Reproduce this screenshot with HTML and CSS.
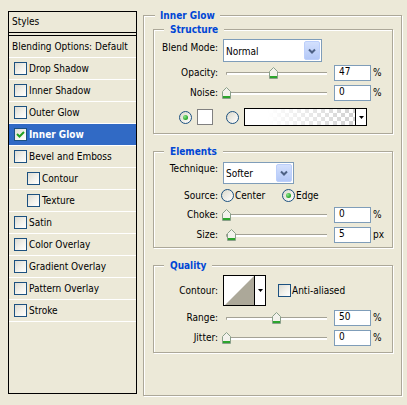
FILE: index.html
```html
<!DOCTYPE html>
<html lang="en">
<head>
<meta charset="utf-8">
<title>Layer Style - Inner Glow</title>
<link rel="stylesheet" href="styles.css">
</head>
<body>
<div class="dialog">
  <div class="styles-list">
    <div class="sl-head">Styles</div>
    <div class="sl-row sl-blend">Blending Options: Default</div>
    <div class="sl-row"><span class="cb"></span><span>Drop Shadow</span></div>
    <div class="sl-row"><span class="cb"></span><span>Inner Shadow</span></div>
    <div class="sl-row"><span class="cb"></span><span>Outer Glow</span></div>
    <div class="sl-row is-selected"><span class="cb"><svg width="11" height="11" viewBox="0 0 11 11"><path d="M2 5 L4.5 7.5 L9 3" fill="none" stroke="#21A121" stroke-width="2"/></svg></span><span>Inner Glow</span></div>
    <div class="sl-row"><span class="cb"></span><span>Bevel and Emboss</span></div>
    <div class="sl-row sl-sub"><span class="cb"></span><span>Contour</span></div>
    <div class="sl-row sl-sub"><span class="cb"></span><span>Texture</span></div>
    <div class="sl-row"><span class="cb"></span><span>Satin</span></div>
    <div class="sl-row"><span class="cb"></span><span>Color Overlay</span></div>
    <div class="sl-row"><span class="cb"></span><span>Gradient Overlay</span></div>
    <div class="sl-row"><span class="cb"></span><span>Pattern Overlay</span></div>
    <div class="sl-row"><span class="cb"></span><span>Stroke</span></div>
  </div>

  <div class="group group-main">
    <div class="legend legend-main">Inner Glow</div>

    <div class="group group-sub group-structure">
      <div class="legend">Structure</div>
      <div class="row row-blend">
        <div class="lbl">Blend Mode:</div>
        <div class="combo combo-blend"><span class="combo-text">Normal</span><span class="combo-btn"><svg width="8" height="6" viewBox="0 0 8 6"><path d="M1 1.5 L4 4.5 L7 1.5" fill="none" stroke="#4D6185" stroke-width="2"/></svg></span></div>
      </div>
      <div class="row row-opacity">
        <div class="lbl lbl-s">Opacity:</div>
        <div class="slider"><div class="track"></div><svg class="thumb" style="left:47px" width="9" height="12" viewBox="0 0 9 12"><path d="M0.5 11.5V4.5L4.5 0.5L8.5 4.5V11.5Z" fill="#F3F2EC" stroke="#8AA08A"/><rect x="1" y="9" width="7" height="2" fill="#2CA52C"/></svg></div>
        <div class="num">47</div><div class="unit">%</div>
      </div>
      <div class="row row-noise">
        <div class="lbl lbl-s">Noise:</div>
        <div class="slider"><div class="track"></div><svg class="thumb" style="left:0px" width="9" height="12" viewBox="0 0 9 12"><path d="M0.5 11.5V4.5L4.5 0.5L8.5 4.5V11.5Z" fill="#F3F2EC" stroke="#8AA08A"/><rect x="1" y="9" width="7" height="2" fill="#2CA52C"/></svg></div>
        <div class="num">0</div><div class="unit">%</div>
      </div>
      <div class="row row-color">
        <span class="radio radio-1 on"></span>
        <span class="swatch"></span>
        <span class="radio radio-2"></span>
        <div class="grad"><div class="grad-fill"></div><div class="grad-arrow"><svg width="5" height="3" viewBox="0 0 5 3"><path d="M0 0H5L2.5 3Z" fill="#000"/></svg></div></div>
      </div>
    </div>

    <div class="group group-sub group-elements">
      <div class="legend">Elements</div>
      <div class="row row-tech">
        <div class="lbl">Technique:</div>
        <div class="combo combo-tech"><span class="combo-text">Softer</span><span class="combo-btn"><svg width="8" height="6" viewBox="0 0 8 6"><path d="M1 1.5 L4 4.5 L7 1.5" fill="none" stroke="#4D6185" stroke-width="2"/></svg></span></div>
      </div>
      <div class="row row-source">
        <div class="lbl">Source:</div>
        <div class="opt opt-center"><span class="radio"></span><span class="opt-text">Center</span></div>
        <div class="opt"><span class="radio on"></span><span class="opt-text">Edge</span></div>
      </div>
      <div class="row row-choke">
        <div class="lbl lbl-s">Choke:</div>
        <div class="slider"><div class="track"></div><svg class="thumb" style="left:0px" width="9" height="12" viewBox="0 0 9 12"><path d="M0.5 11.5V4.5L4.5 0.5L8.5 4.5V11.5Z" fill="#F3F2EC" stroke="#8AA08A"/><rect x="1" y="9" width="7" height="2" fill="#2CA52C"/></svg></div>
        <div class="num">0</div><div class="unit">%</div>
      </div>
      <div class="row row-size">
        <div class="lbl lbl-s">Size:</div>
        <div class="slider"><div class="track"></div><svg class="thumb" style="left:5px" width="9" height="12" viewBox="0 0 9 12"><path d="M0.5 11.5V4.5L4.5 0.5L8.5 4.5V11.5Z" fill="#F3F2EC" stroke="#8AA08A"/><rect x="1" y="9" width="7" height="2" fill="#2CA52C"/></svg></div>
        <div class="num">5</div><div class="unit">px</div>
      </div>
    </div>

    <div class="group group-sub group-quality">
      <div class="legend">Quality</div>
      <div class="row row-contour">
        <div class="lbl">Contour:</div>
        <div class="contour-box"><svg class="contour-curve" width="30" height="29" viewBox="0 0 30 29"><polygon points="1,29 30,0 30,29" fill="#ACA899"/></svg><div class="contour-arrow"><svg width="5" height="3" viewBox="0 0 5 3"><path d="M0 0H5L2.5 3Z" fill="#000"/></svg></div></div>
        <div class="aa"><span class="cb"></span><span class="opt-text">Anti-aliased</span></div>
      </div>
      <div class="row row-range">
        <div class="lbl lbl-s">Range:</div>
        <div class="slider"><div class="track"></div><svg class="thumb" style="left:50px" width="9" height="12" viewBox="0 0 9 12"><path d="M0.5 11.5V4.5L4.5 0.5L8.5 4.5V11.5Z" fill="#F3F2EC" stroke="#8AA08A"/><rect x="1" y="9" width="7" height="2" fill="#2CA52C"/></svg></div>
        <div class="num">50</div><div class="unit">%</div>
      </div>
      <div class="row row-jitter">
        <div class="lbl lbl-s">Jitter:</div>
        <div class="slider"><div class="track"></div><svg class="thumb" style="left:0px" width="9" height="12" viewBox="0 0 9 12"><path d="M0.5 11.5V4.5L4.5 0.5L8.5 4.5V11.5Z" fill="#F3F2EC" stroke="#8AA08A"/><rect x="1" y="9" width="7" height="2" fill="#2CA52C"/></svg></div>
        <div class="num">0</div><div class="unit">%</div>
      </div>
    </div>
  </div>
</div>
</body>
</html>
```
FILE: styles.css
```css
* { box-sizing: border-box; }
html, body { margin: 0; padding: 0; }
body {
  width: 407px;
  height: 405px;
  overflow: hidden;
  background: #ECE9D8;
  font-family: "DejaVu Sans Condensed", "Liberation Sans", sans-serif;
  font-size: 10px;
  line-height: 13px;
  color: #000;
}
.dialog {
  display: flex;
  align-items: flex-start;
  padding: 11px 0 0 8px;
}

/* ---------- styles list ---------- */
.styles-list {
  flex: none;
  width: 129px;
  height: 383px;
  border: 1px solid #000;
}
.sl-head {
  height: 21px;
  padding: 3px 0 0 3px;
  border-bottom: 1px solid #000;
  margin-bottom: 2px;
}
.sl-row {
  display: flex;
  align-items: center;
  height: 22px;
  padding-left: 5px;
  border-bottom: 1px solid #fff;
}
.sl-row .cb { margin-right: 2px; }
.sl-blend {
  height: 23px;
  padding-left: 3px;
  border-top: 1px solid #000;
}
.sl-sub { padding-left: 18px; }
.sl-row.is-selected {
  background: #316AC5;
  color: #fff;
  font-weight: bold;
}

.cb {
  flex: none;
  width: 13px;
  height: 13px;
  border: 1px solid #1C5180;
  background: linear-gradient(135deg, #DCDBD3 0%, #F3F2EC 55%, #fff 100%);
  display: flex;
  align-items: center;
  justify-content: center;
}

/* ---------- group boxes ---------- */
.group {
  border: 1px solid #ACA899;
  box-shadow: inset 1px 1px 0 #fff, 1px 1px 0 #fff;
}
.group-main {
  flex: none;
  width: 259px;
  height: 381px;
  margin: 4px 0 0 6px;
  padding: 0 8px 0 9px;
}
.group-sub { width: 240px; }
.group-structure { margin-top: 7px; padding-bottom: 7px; }
.group-elements { margin-top: 17px; padding-bottom: 4px; }
.group-quality { margin-top: 17px; padding-bottom: 6px; }

.legend {
  width: fit-content;
  height: 13px;
  margin: -7px 0 0 10px;
  padding: 0 6px;
  background: #ECE9D8;
  color: #0046D5;
  font-weight: bold;
}
.legend-main {
  margin-left: 2px;
  padding: 0 5px;
}

/* ---------- rows ---------- */
.row {
  display: flex;
  align-items: center;
}
.lbl {
  flex: none;
  width: 64px;
  text-align: right;
}
.lbl-s { padding-bottom: 2px; }

.row-blend { margin-top: 3px; height: 23px; align-items: flex-start; }
.row-blend .lbl { padding-top: 2px; }
.row-opacity { margin-top: 3px; height: 16px; }
.row-noise { margin-top: 4px; height: 16px; }
.row-color { margin-top: 7px; height: 18px; }
.row-tech { margin-top: 4px; height: 22px; align-items: flex-start; }
.row-source { margin-top: 5px; height: 13px; }
.row-choke { margin-top: 5px; height: 16px; }
.row-size { margin-top: 4px; height: 16px; }
.row-contour { margin-top: 3px; height: 31px; }
.row-range { margin-top: 4px; height: 16px; }
.row-jitter { margin-top: 4px; height: 16px; }

/* ---------- combo box ---------- */
.combo {
  flex: none;
  display: flex;
  margin-left: 5px;
  border: 1px solid #7F9DB9;
  background: #fff;
}
.combo-blend { width: 99px; height: 23px; }
.combo-tech { width: 71px; height: 22px; }
.combo-text { flex: 1; padding-left: 2px; }
.combo-blend .combo-text { padding-top: 5px; }
.combo-tech .combo-text { padding-top: 4px; }
.combo-btn {
  flex: none;
  width: 16px;
  margin: 1px;
  border: 1px solid #BCCFFB;
  border-radius: 2px;
  background: linear-gradient(#D3E0FD, #B3C8F7);
  display: flex;
  align-items: center;
  justify-content: center;
}

/* ---------- slider ---------- */
.slider {
  flex: none;
  position: relative;
  width: 109px;
  height: 12px;
  margin-left: 4px;
}
.track {
  position: absolute;
  left: 4px;
  right: 4px;
  top: 5px;
  height: 3px;
  background: #fff;
  border-top: 1px solid #A4A295;
  border-left: 1px solid #A4A295;
  border-radius: 1px 0 0 1px;
}
.thumb {
  position: absolute;
  top: 0;
  display: block;
}

/* ---------- numeric field ---------- */
.num {
  flex: none;
  width: 37px;
  height: 16px;
  margin-left: 3px;
  padding-left: 4px;
  border: 1px solid #7F9DB9;
  background: #fff;
  line-height: 12px;
}
.unit {
  margin-left: 2px;
  padding-bottom: 2px;
}

/* ---------- radios, swatches ---------- */
.radio {
  flex: none;
  width: 13px;
  height: 13px;
  border-radius: 50%;
  border: 1px solid #1C5180;
  background: linear-gradient(135deg, #DCD9CB, #fff);
  display: flex;
  align-items: center;
  justify-content: center;
}
.radio.on::after {
  content: "";
  width: 5px;
  height: 5px;
  border-radius: 50%;
  background: radial-gradient(circle at 35% 35%, #8BE68B, #1E9E1E 75%);
}
.radio-1 { margin-left: 25px; }
.radio-2 { margin-left: 13px; }
.swatch {
  flex: none;
  width: 16px;
  height: 16px;
  margin-left: 5px;
  border: 1px solid #808080;
  background: #fff;
}
.grad {
  flex: none;
  display: flex;
  width: 123px;
  height: 18px;
  margin-left: 5px;
  border: 1px solid #000;
}
.grad-fill {
  flex: 1;
  background:
    linear-gradient(to right, #fff 0%, #fff 20%, rgba(255,255,255,0.1) 100%),
    repeating-conic-gradient(#CCCCCC 0 25%, #fff 0 50%) 0 0 / 8px 8px;
}
.grad-arrow {
  flex: none;
  width: 11px;
  border-left: 1px solid #000;
  background: #fff;
  display: flex;
  align-items: center;
  justify-content: center;
}

.opt {
  display: flex;
  align-items: center;
}
.opt-center {
  width: 61px;
  margin-left: 3px;
}
.opt-text { margin-left: 1px; }

/* ---------- contour ---------- */
.contour-box {
  flex: none;
  display: flex;
  width: 43px;
  height: 31px;
  margin-left: 5px;
  border: 1px solid #000;
  background: #fff;
}
.contour-curve { display: block; flex: none; }
.contour-arrow {
  flex: 1;
  border-left: 1px solid #000;
  display: flex;
  align-items: center;
  justify-content: center;
}
.aa {
  display: flex;
  align-items: center;
  margin-left: 12px;
}
```
